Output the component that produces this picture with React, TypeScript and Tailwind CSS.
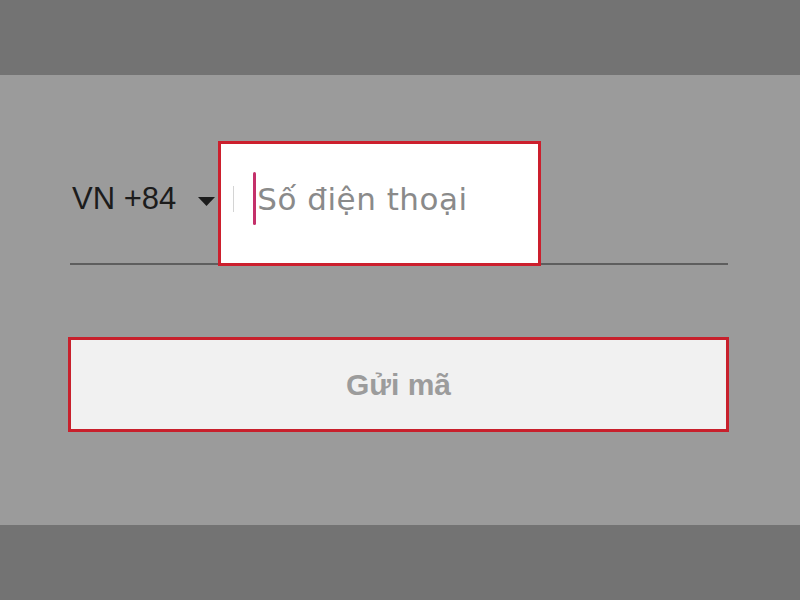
export default function App() {
  return (
    <div className="flex h-[600px] w-[800px] flex-col bg-[#737373]">
      {/* top dim band */}
      <div className="h-[75px] bg-[#737373]" />

      {/* phone form */}
      <div className="flex h-[450px] flex-col bg-[#9b9b9b] px-[68px]">
        <div className="mt-[66px] ml-[2px] mr-[4px] flex h-[124px] items-center border-b-2 border-[#5e5e5e] pb-[8px]">
          <span className="pl-[2px] font-['Liberation_Sans',Arial,sans-serif] text-[31px] leading-none text-[#1c1c1c]">
            VN +84
          </span>
          <svg className="ml-[22px] mt-[6px]" width="17" height="9" viewBox="0 0 17 9">
            <path d="M0 0 H17 L8.5 9 Z" fill="#1c1c1c" />
          </svg>
          <div className="relative ml-[3px] flex h-[125px] w-[323px] items-center self-start border-[3px] border-[#cc1f2d] bg-white pb-[10px] pl-[12px]">
            <div className="h-[26px] w-px bg-[#d4d4d4]" />
            <div className="ml-[19px] h-[53px] w-[3px] rounded-full bg-[#c4306a]" />
            <span className="ml-[1px] mt-[2px] font-['DejaVu_Sans',sans-serif] text-[31px] leading-none tracking-[0.5px] text-[#8a8a8a]">
              Số điện thoại
            </span>
          </div>
        </div>

        <button className="mt-[72px] mr-[3px] flex h-[95px] items-center justify-center border-[3px] border-[#c8202c] bg-[#f1f1f1] font-['Liberation_Sans',Arial,sans-serif] text-[30px] font-bold text-[#9c9c9c]">
          Gửi mã
        </button>
      </div>

      {/* bottom dim band */}
      <div className="flex-1 bg-[#737373]" />
    </div>
  );
}
